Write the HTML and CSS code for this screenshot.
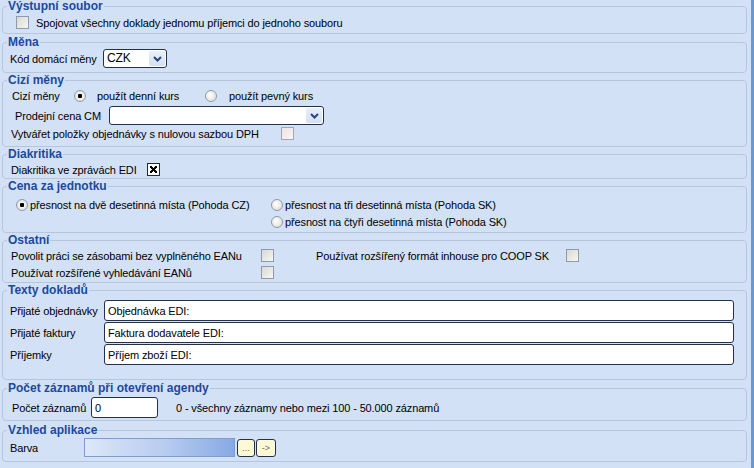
FILE: index.html
```html
<!DOCTYPE html>
<html lang="cs">
<head>
  <meta charset="UTF-8">
  <title>Nastavení EDI</title>
  <link rel="stylesheet" href="styles.css">
</head>
<body>
  <div class="form">
    <fieldset class="group g-output">
      <legend>Výstupní soubor</legend>
      <div class="row">
        <input type="checkbox" class="check ml-13">
        <span class="ml-7">Spojovat všechny doklady jednomu příjemci do jednoho souboru</span>
      </div>
    </fieldset>

    <fieldset class="group g-currency">
      <legend>Měna</legend>
      <div class="row row-field">
        <span class="lbl pl-7 w-93">Kód domácí měny</span>
        <div class="select w-64"><span class="select-value">CZK</span><span class="select-arrow"><svg width="9" height="6" viewBox="0 0 9 6"><path d="M1 1l3.5 3.5L8 1" fill="none" stroke="#234680" stroke-width="2"/></svg></span></div>
      </div>
    </fieldset>

    <fieldset class="group g-foreign">
      <legend>Cizí měny</legend>
      <div class="row">
        <span class="lbl pl-9 w-62">Cizí měny</span>
        <input type="radio" name="kurs" class="radio" checked>
        <span class="ml-11 w-108">použít denní kurs</span>
        <input type="radio" name="kurs" class="radio">
        <span class="ml-12">použít pevný kurs</span>
      </div>
      <div class="row row-field mt-2">
        <span class="lbl pl-12 w-94">Prodejní cena CM</span>
        <div class="select w-215"><span class="select-value"></span><span class="select-arrow"><svg width="9" height="6" viewBox="0 0 9 6"><path d="M1 1l3.5 3.5L8 1" fill="none" stroke="#234680" stroke-width="2"/></svg></span></div>
      </div>
      <div class="row">
        <span class="lbl pl-8 w-270">Vytvářet položky objednávky s nulovou sazbou DPH</span>
        <input type="checkbox" class="check check-off" disabled>
      </div>
    </fieldset>

    <fieldset class="group g-diacritics">
      <legend>Diakritika</legend>
      <div class="row">
        <span class="lbl pl-8 w-136">Diakritika ve zprávách EDI</span>
        <input type="checkbox" class="check check-x" checked>
      </div>
    </fieldset>

    <fieldset class="group g-price">
      <legend>Cena za jednotku</legend>
      <div class="price-cols">
        <div class="col w-268 pl-13">
          <label class="row"><input type="radio" name="prec" class="radio" checked><span class="ml-2">přesnost na dvě desetinná místa (Pohoda CZ)</span></label>
        </div>
        <div class="col">
          <label class="row"><input type="radio" name="prec" class="radio"><span class="ml-2">přesnost na tři desetinná místa (Pohoda SK)</span></label>
          <label class="row"><input type="radio" name="prec" class="radio"><span class="ml-2">přesnost na čtyři desetinná místa (Pohoda SK)</span></label>
        </div>
      </div>
    </fieldset>

    <fieldset class="group g-other">
      <legend>Ostatní</legend>
      <div class="row">
        <span class="lbl pl-8 w-250">Povolit práci se zásobami bez vyplněného EANu</span>
        <input type="checkbox" class="check">
        <span class="lbl ml-42 w-250">Používat rozšířený formát inhouse pro COOP SK</span>
        <input type="checkbox" class="check">
      </div>
      <div class="row">
        <span class="lbl pl-8 w-250">Používat rozšířené vyhledávání EANů</span>
        <input type="checkbox" class="check">
      </div>
    </fieldset>

    <fieldset class="group g-texts">
      <legend>Texty dokladů</legend>
      <div class="text-row">
        <span class="lbl pl-7 w-94">Přijaté objednávky</span>
        <input type="text" class="text w-630" value="Objednávka EDI:">
      </div>
      <div class="text-row">
        <span class="lbl pl-7 w-94">Přijaté faktury</span>
        <input type="text" class="text w-630" value="Faktura dodavatele EDI:">
      </div>
      <div class="text-row">
        <span class="lbl pl-7 w-94">Příjemky</span>
        <input type="text" class="text w-630" value="Příjem zboží EDI:">
      </div>
    </fieldset>

    <fieldset class="group g-count">
      <legend>Počet záznamů při otevření agendy</legend>
      <div class="text-row">
        <span class="lbl pl-9 w-79">Počet záznamů</span>
        <input type="text" class="text w-67" value="0">
        <span class="ml-18">0 - všechny záznamy nebo mezi 100 - 50.000 záznamů</span>
      </div>
    </fieldset>

    <fieldset class="group g-look">
      <legend>Vzhled aplikace</legend>
      <div class="color-row">
        <span class="lbl pl-7 w-74">Barva</span>
        <span class="swatch"></span>
        <button type="button" class="mini w-18">...</button>
        <button type="button" class="mini w-20">-&gt;</button>
      </div>
    </fieldset>
  </div>
</body>
</html>
```

FILE: styles.css
```css
/* Base */
:root {
  --bg: #d3e1f6;
  --frame: #b6c6dc;
  --title: #1b4a9c;
  --edge: #7096cf;
  --field-border: #23324a;
}

* {
  box-sizing: border-box;
}

body {
  margin: 0;
  background: var(--bg);
  font-family: "Liberation Sans", Arial, sans-serif;
  font-size: 11px;
  letter-spacing: -0.13px;
  color: #000;
}

.form {
  width: 754px;
  height: 468px;
  padding: 0 4px 0 2px;
  border-right: 3px solid var(--edge);
}

/* Group boxes */
.group {
  margin: 0 0 1px;
  padding: 0;
  min-width: 0;
  border: 1px solid var(--frame);
  border-radius: 4px;
}

.group legend {
  margin-left: 4px;
  padding: 0 1px;
  font-size: 12px;
  font-weight: bold;
  line-height: 13px;
  letter-spacing: 0;
  color: var(--title);
}

.g-output { padding: 1px 0 2px; margin-bottom: 2px; }
.g-currency { padding: 0 0 4px; }
.g-foreign { padding: 0 0 4px; }
.g-diacritics { padding: 0; }
.g-price { padding: 3px 0 2px; }
.g-other { padding: 0 0 1px; }
.g-texts { padding: 3px 0 13px; margin-bottom: 2px; }
.g-count { padding: 2px 0 1px; margin-bottom: 3px; }
.g-look { padding: 1px 0 4px; }

/* Rows */
.row {
  display: flex;
  align-items: center;
  height: 17px;
  white-space: nowrap;
}

.row-field {
  height: 19px;
}

.lbl {
  flex: none;
  box-sizing: content-box;
  white-space: nowrap;
}

.price-cols {
  display: flex;
}

.col {
  display: flex;
  flex-direction: column;
}

.text-row {
  display: flex;
  align-items: center;
  height: 21px;
  margin-bottom: 1px;
}

.color-row {
  display: flex;
  align-items: center;
  height: 19px;
}

/* Checkboxes and radios */
.check {
  appearance: none;
  flex: none;
  width: 13px;
  height: 13px;
  margin: 0;
  border: 1px solid #8d9ab0;
  background: linear-gradient(135deg, #d9d9d1, #f7f7f3);
}

.check-off {
  border-color: #a9a4b0;
  background: linear-gradient(135deg, #efe3e6, #faf5f5);
}

.check-x {
  border-color: #2a2a2a;
  background:
    linear-gradient(45deg, transparent 38%, #000 38%, #000 60%, transparent 60%) center / 7px 7px no-repeat,
    linear-gradient(-45deg, transparent 38%, #000 38%, #000 60%, transparent 60%) center / 7px 7px no-repeat,
    #fff;
}

.radio {
  appearance: none;
  flex: none;
  width: 12px;
  height: 12px;
  margin: 0;
  border: 1px solid #8f9aab;
  border-radius: 50%;
  background: radial-gradient(circle at 40% 40%, #ffffff, #d8d8d0);
}

.radio:checked {
  background: radial-gradient(circle, #000 0 2px, #f4f4f0 2.5px, #d8d8d0);
}

/* Select boxes */
.select {
  display: flex;
  height: 19px;
  background: #fff;
  border: 1px solid var(--field-border);
  border-radius: 3px;
}

.select-value {
  flex: 1;
  padding: 2px 0 0 3px;
  font-size: 12px;
  line-height: 13px;
}

.select-arrow {
  display: flex;
  align-items: center;
  justify-content: center;
  width: 16px;
  margin: 1px;
  background: linear-gradient(#e9eff8, #d4e0f1);
  border-radius: 2px;
}

/* Text inputs */
.text {
  flex: none;
  height: 21px;
  margin: 0;
  padding: 0 0 0 3px;
  border: 1px solid var(--field-border);
  border-radius: 3px;
  background: #fff;
  font-family: inherit;
  font-size: 11px;
  letter-spacing: -0.13px;
  color: #000;
}

/* Colour picker */
.swatch {
  flex: none;
  width: 151px;
  height: 19px;
  border: 1px solid #7f9ccc;
  background: linear-gradient(90deg, #dde7f7, #b6cbef 55%, #87aae4);
}

.mini {
  flex: none;
  height: 18px;
  margin: 0 0 0 1px;
  padding: 0;
  border: 1px solid var(--field-border);
  border-radius: 3px;
  background: #fdf8d6;
  font-family: inherit;
  font-size: 9px;
  color: #6f6f5a;
}

.mini:first-of-type {
  margin-left: 2px;
}

/* Spacing helpers */
.ml-2 { margin-left: 2px; }
.ml-7 { margin-left: 7px; }
.ml-11 { margin-left: 11px; }
.ml-12 { margin-left: 12px; }
.ml-13 { margin-left: 13px; }
.ml-18 { margin-left: 18px; }
.ml-42 { margin-left: 42px; }
.mt-2 { margin-top: 2px; }
.pl-7 { padding-left: 7px; }
.pl-8 { padding-left: 8px; }
.pl-9 { padding-left: 9px; }
.pl-12 { padding-left: 12px; }
.pl-13 { padding-left: 13px; }

.w-18 { width: 18px; }
.w-20 { width: 20px; }
.w-62 { width: 62px; }
.w-64 { width: 64px; }
.w-67 { width: 67px; }
.w-74 { width: 74px; }
.w-79 { width: 79px; }
.w-93 { width: 93px; }
.w-94 { width: 94px; }
.w-108 { width: 108px; }
.w-136 { width: 136px; }
.w-215 { width: 215px; }
.w-250 { width: 250px; }
.w-268 { width: 268px; }
.w-270 { width: 270px; }
.w-630 { width: 630px; }
```
